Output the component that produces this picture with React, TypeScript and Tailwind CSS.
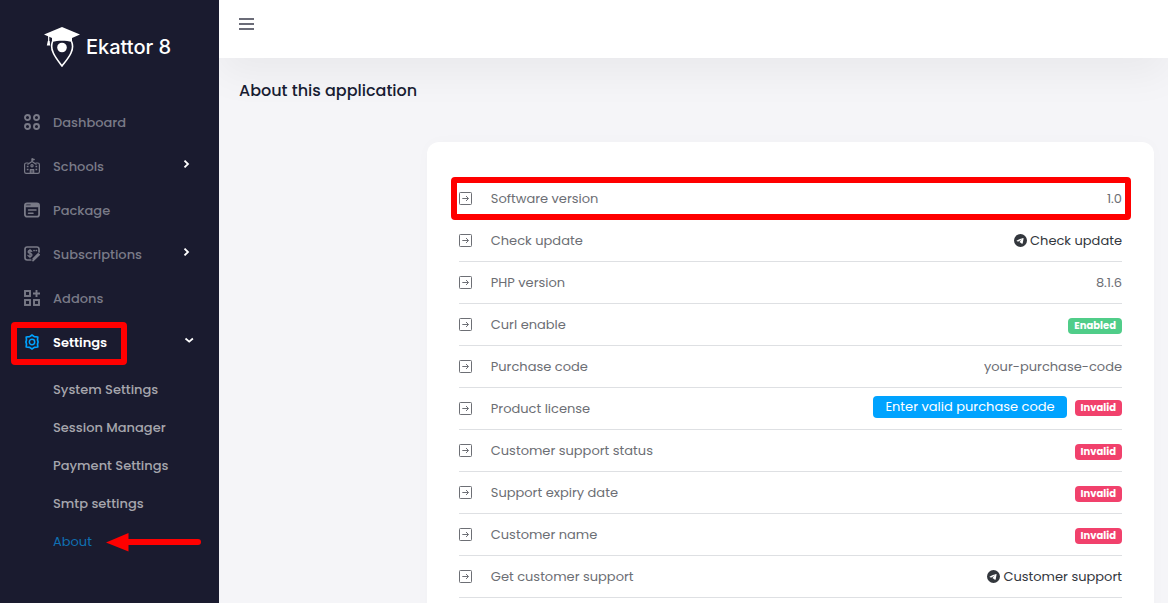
import type { ReactNode } from "react";
import { BsTelegram } from "react-icons/bs";

const iconClass = "size-4 shrink-0";

function Logo() {
  return (
    <svg className="h-10 w-9 shrink-0" viewBox="0 0 36 40" fill="none" aria-hidden="true">
      <path d="M0 7.500 18 0l18 7.500-8 3.500V15c-6-1.600-14-1.600-20 0v-4z" fill="#fff" />
      <path d="M4.700 8.500v7" stroke="#fff" strokeWidth="1.200" />
      <path d="M3.800 14h1.800l.6 4.500H2.800z" fill="#fff" />
      <path d="M8.500 14.500c-1.400 4-1.100 7.500.7 11.200C11.300 30.500 15 35 18 39c3-4 7-8.500 9.100-13.300 1.800-3.700 2-7.200.5-11.200" stroke="#fff" strokeWidth="1.600" />
      <circle cx="18" cy="20.500" r="4.800" fill="#fff" />
    </svg>
  );
}

function DashboardIcon() {
  return (
    <svg className={iconClass} viewBox="0 0 16 16" fill="none" stroke="currentColor" strokeWidth="1.900" aria-hidden="true">
      <circle cx="3.500" cy="3.500" r="2.500" />
      <circle cx="12.500" cy="3.500" r="2.500" />
      <circle cx="3.500" cy="12.500" r="2.500" />
      <circle cx="12.500" cy="12.500" r="2.500" />
    </svg>
  );
}

function SchoolIcon() {
  return (
    <svg className={iconClass} viewBox="0 0 16 16" fill="none" stroke="currentColor" strokeWidth="1.200" strokeLinejoin="round" aria-hidden="true">
      <path d="M4.500 5H2.200C1.100 5 .6 5.700.6 6.700v7c0 1 .6 1.700 1.600 1.700h11.600c1 0 1.600-.7 1.600-1.700v-7c0-1-.5-1.700-1.600-1.700h-2.300" />
      <path d="M3.500 6.500 8 3.500l4.500 3M8 3.500V.5" />
      <path d="M8 .3 11 1.500 8 2.800z" fill="currentColor" strokeWidth=".5" />
      <path d="M6.300 15.200v-3.600h3.400v3.600M8 11.800v3.400" />
      <circle cx="8" cy="7.800" r="1.100" />
      <path d="M2.800 8.500h1.700M2.800 11.500h1.700M11.500 8.500h1.700M11.500 11.500h1.700" strokeWidth="1.400" />
    </svg>
  );
}

function PackageIcon() {
  return (
    <svg className={iconClass} viewBox="0 0 16 16" fill="none" stroke="currentColor" strokeWidth="1.800" strokeLinecap="round" aria-hidden="true">
      <rect x=".9" y="1.500" width="14.200" height="13.200" rx="2.200" />
      <path d="M1.500 4.200h13M7.500 2.800H14" strokeWidth="2" />
      <path d="M4.500 8h7.500M4.500 11.200H9" strokeWidth="1.500" />
    </svg>
  );
}

function SubscriptionIcon() {
  return (
    <svg className={iconClass} viewBox="0 0 16 16" fill="none" stroke="currentColor" strokeWidth="1.700" strokeLinecap="round" strokeLinejoin="round" aria-hidden="true">
      <path d="M15 6V3.200C15 1.800 14.200 1 12.800 1H3.200C1.800 1 1 1.800 1 3.200v8.600c0 1.400.8 2.200 2.200 2.200h3.600" />
      <path d="M7.800 5.500C7.400 4.800 6.700 4.500 6 4.500c-1.100 0-1.900.5-1.900 1.400 0 1 .9 1.300 1.900 1.500s2 .6 2 1.600c0 .9-.9 1.500-2 1.500-.9 0-1.700-.4-2-1.100M6 3.300v8.400" strokeWidth="1.300" />
      <path d="M10 4.500h.1M12.300 4.500h.1" />
      <path d="m9.200 12.800 5-5M9 14.600l6.200-6" />
    </svg>
  );
}

function AddonsIcon() {
  return (
    <svg className={iconClass} viewBox="0 0 16 16" fill="none" stroke="currentColor" strokeWidth="1.900" aria-hidden="true">
      <rect x="1" y="1" width="5" height="5" />
      <rect x="1" y="10" width="5" height="5" />
      <rect x="10" y="10" width="5" height="5" />
      <path d="M12.500 0v7M9 3.500h7" />
    </svg>
  );
}

function SettingsIcon() {
  return (
    <svg className={iconClass} viewBox="0 0 16 16" fill="none" stroke="#00a3ff" strokeLinejoin="round" aria-hidden="true">
      <path d="m8 1 2.300 1.600 3.500.4-.3 3L14.100 8l-.6 2 .3 3-3.500.4L8 15l-2.300-1.600-3.500-.4.3-3L1.900 8l.6-2-.3-3 3.500-.4z" strokeWidth="1.700" />
      <circle cx="8" cy="8" r="2.700" strokeWidth="1.500" />
    </svg>
  );
}

function ChevronRight() {
  return (
    <svg className="mb-1 h-2 w-[10px]" viewBox="0 0 10 8" fill="none" stroke="#fff" strokeWidth="1.800" aria-hidden="true">
      <path d="M1.500.6 5 4 1.500 7.400" />
    </svg>
  );
}

function ChevronDown() {
  return (
    <svg className="mb-1 h-2 w-[10px]" viewBox="0 0 10 8" fill="none" stroke="#fff" strokeWidth="1.800" aria-hidden="true">
      <path d="M1.500 2.500 5.200 5.600 8.900 2.500" />
    </svg>
  );
}

function ArrowBox() {
  return (
    <svg className="size-[13px] shrink-0" viewBox="0 0 13 13" fill="none" stroke="#6d6f75" aria-hidden="true">
      <rect x=".5" y=".5" width="12" height="12" rx=".8" />
      <path d="M3.300 6.500h6M7 4l2.500 2.500L7 9" />
    </svg>
  );
}

const menu: { label: string; icon: ReactNode; expandable?: boolean }[] = [
  { label: "Dashboard", icon: <DashboardIcon /> },
  { label: "Schools", icon: <SchoolIcon />, expandable: true },
  { label: "Package", icon: <PackageIcon /> },
  { label: "Subscriptions", icon: <SubscriptionIcon />, expandable: true },
  { label: "Addons", icon: <AddonsIcon /> },
];

const settingsPages = ["System Settings", "Session Manager", "Payment Settings", "Smtp settings"];

function Sidebar() {
  return (
    <aside className="w-[219px] shrink-0 bg-[#1a1b2f]">
      <a href="#" className="mt-[27px] ml-11 flex items-center gap-[6px] font-['Inter',sans-serif] text-xl font-medium text-white">
        <Logo />
        <span>Ekattor 8</span>
      </a>
      <nav className="mt-[33px] text-[13px] font-medium">
        <ul>
          {menu.map((item) => (
            <li key={item.label}>
              <a href="#" className="flex h-11 items-center pr-[26px] pl-6 text-[#797a87]">
                {item.icon}
                <span className="ml-[13px] flex-1 pt-[2px]">{item.label}</span>
                {item.expandable && <ChevronRight />}
              </a>
            </li>
          ))}
          <li>
            <button type="button" aria-expanded="true" className="relative flex h-11 w-full items-center pr-[25px] pl-6 text-left font-semibold text-white">
              <SettingsIcon />
              <span className="ml-[13px] flex-1 pt-[2px]">Settings</span>
              <ChevronDown />
              <span className="absolute top-[2px] left-[11px] h-[43px] w-[116px] rounded-sm border-6 border-[#ff0000]" />
            </button>
            <ul className="pt-[7px] pl-[53px]">
              {settingsPages.map((page) => (
                <li key={page}>
                  <a href="#" className="flex h-[38px] items-center text-[#a6a6ad]">{page}</a>
                </li>
              ))}
              <li className="flex h-[38px] items-center gap-[14px]">
                <a href="#" aria-current="page" className="font-normal text-[#0f70b2]">About</a>
                <svg className="h-5 w-[95px]" viewBox="0 0 95 20" aria-hidden="true">
                  <path d="M18 10h74" stroke="#f00" strokeWidth="6" strokeLinecap="round" />
                  <path d="M0 10.500 22.500 1v18.500z" fill="#f00" />
                </svg>
              </li>
            </ul>
          </li>
        </ul>
      </nav>
    </aside>
  );
}

function Badge({ tone, children }: { tone: "success" | "danger"; children: ReactNode }) {
  return (
    <span className={`mt-[2px] rounded px-[6px] text-[10px] leading-4 font-bold text-white ${tone === "success" ? "bg-[#50cd89]" : "bg-[#f1416c]"}`}>
      {children}
    </span>
  );
}

function ActionLink({ children }: { children: ReactNode }) {
  return (
    <a href="#" className="flex items-center gap-[3px] text-[#33373d]">
      <BsTelegram className="size-[13px]" />
      {children}
    </a>
  );
}

const rows: { label: string; value: ReactNode; marked?: boolean }[] = [
  { label: "Software version", value: "1.0", marked: true },
  { label: "Check update", value: <ActionLink>Check update</ActionLink> },
  { label: "PHP version", value: "8.1.6" },
  { label: "Curl enable", value: <Badge tone="success">Enabled</Badge> },
  { label: "Purchase code", value: "your-purchase-code" },
  {
    label: "Product license",
    value: (
      <div className="flex items-center gap-2 pb-[3px]">
        <button type="button" className="rounded bg-[#00a3ff] px-3 leading-[22px] text-white">Enter valid purchase code</button>
        <Badge tone="danger">Invalid</Badge>
      </div>
    ),
  },
  { label: "Customer support status", value: <Badge tone="danger">Invalid</Badge> },
  { label: "Support expiry date", value: <Badge tone="danger">Invalid</Badge> },
  { label: "Customer name", value: <Badge tone="danger">Invalid</Badge> },
  { label: "Get customer support", value: <ActionLink>Customer support</ActionLink> },
];

export default function App() {
  return (
    <div className="flex h-screen overflow-hidden bg-[#f5f5f8] font-['Poppins','Inter',sans-serif]">
      <Sidebar />
      <div className="min-w-0 flex-1 overflow-hidden">
        <header className="flex h-[58px] items-start bg-white px-5 pt-[18px] shadow-[0_16px_40px_rgba(0,0,0,0.05)]">
          <button type="button" aria-label="Toggle menu" className="flex flex-col gap-[3px]">
            <span className="h-[2px] w-[15px] bg-[#6b6c78]" />
            <span className="h-[2px] w-[15px] bg-[#6b6c78]" />
            <span className="h-[2px] w-[15px] bg-[#6b6c78]" />
          </button>
        </header>
        <main>
          <h1 className="px-5 pt-[21px] text-base leading-6 font-medium text-[#181c32]">About this application</h1>
          <div className="mt-[39px] grid grid-cols-9 pr-[14px]">
            <section className="col-span-7 col-start-3 rounded-xl bg-white px-8 py-9 shadow-[0_0_16px_rgba(0,0,0,0.02)]">
              <dl className="text-[13px] text-[#6c6e74]">
                {rows.map((row) => (
                  <div key={row.label} className="relative flex h-[42px] items-center border-b border-[#dee0e3]">
                    <ArrowBox />
                    <dt className="ml-[19px] flex-1">{row.label}</dt>
                    <dd className="flex items-center">{row.value}</dd>
                    {row.marked && <span className="absolute -top-px -right-[9px] -bottom-px -left-2 rounded-sm border-6 border-[#ff0000]" />}
                  </div>
                ))}
              </dl>
            </section>
          </div>
        </main>
      </div>
    </div>
  );
}
